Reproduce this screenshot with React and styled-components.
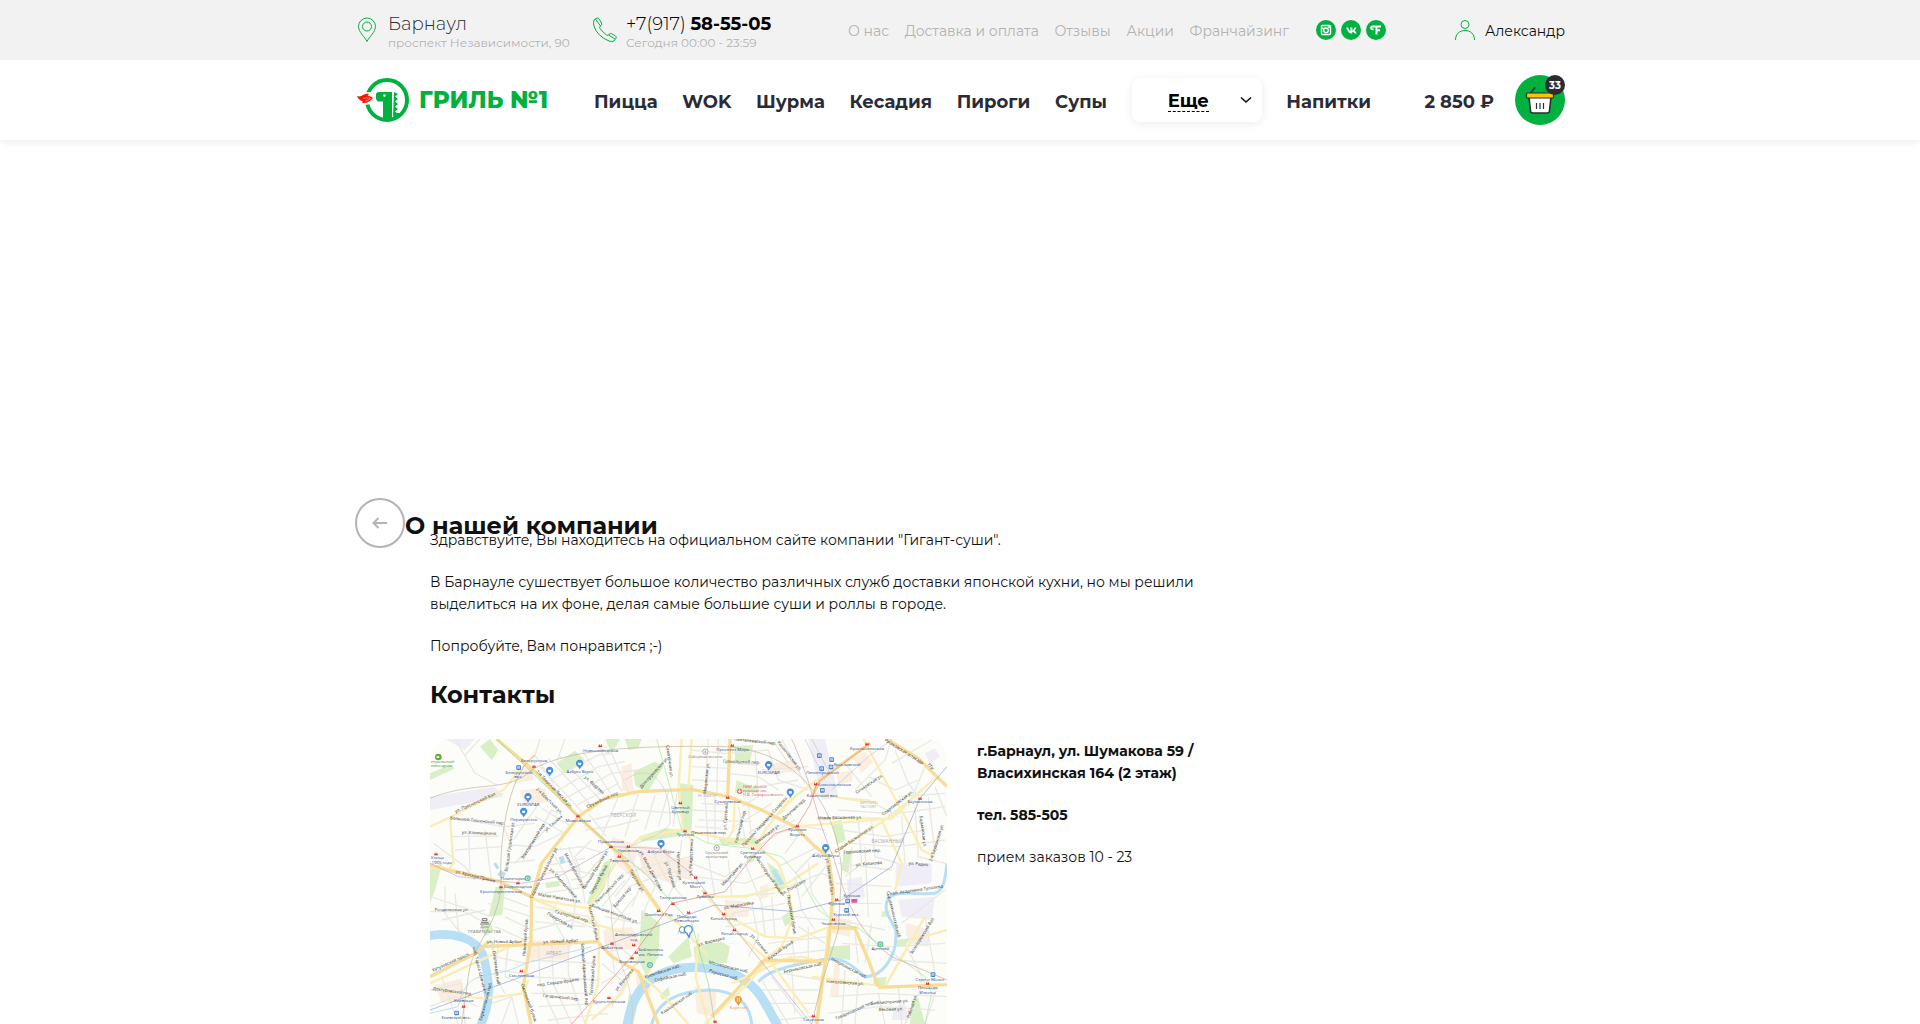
import React from "react";
import styled, { createGlobalStyle } from "styled-components";
import { FaVk } from "react-icons/fa";

const GREEN = "#00b140";
const DARK = "#2b2b35";
const MUTED = "#b3b3b3";

const GlobalStyle = createGlobalStyle`
  * { box-sizing: border-box; }
  body {
    margin: 0;
    background: #fff;
    color: #111;
    font-family: Montserrat, Inter, "Open Sans", sans-serif;
    font-size: 14px;
    font-weight: 400;
    line-height: 22px;
  }
  a { color: inherit; text-decoration: none; }
  h1, h2, p { margin: 0; }
`;

const Page = styled.div`
  min-height: 100vh;
  display: flex;
  flex-direction: column;
`;

const Container = styled.div`
  width: 100%;
  max-width: 1210px;
  margin: 0 auto;
`;

const TopBar = styled.div`
  position: relative;
  z-index: 1;
  background: #f2f2f2;
`;

const TopRow = styled(Container)`
  height: 60px;
  display: grid;
  grid-template-columns: 238px 255px 468px 1fr auto;
  align-items: center;
`;

const InfoBlock = styled.div`
  display: flex;
  align-items: center;
  gap: 9px;
`;

const InfoIcon = styled.svg`
  width: 24px;
  height: 26px;
  flex: none;
  fill: none;
  stroke: ${GREEN};
`;

const InfoLines = styled.div`
  display: flex;
  flex-direction: column;
  padding-top: 4px;
  white-space: nowrap;
`;

const InfoTitle = styled.a`
  font-size: 18px;
  font-weight: 300;
  line-height: 22px;
  color: ${(p) => (p.$dark ? "#000" : DARK)};
  b { font-weight: 700; }
`;

const InfoNote = styled.span`
  font-size: 12px;
  line-height: 16px;
  color: ${MUTED};
`;

const TopLinks = styled.nav`
  width: 441px;
  padding-top: 2px;
  display: flex;
  justify-content: space-between;
  color: ${MUTED};
  white-space: nowrap;
`;

const Socials = styled.div`
  display: flex;
  gap: 5px;
`;

const SocialLink = styled.a`
  width: 20px;
  height: 20px;
  border-radius: 50%;
  background: ${GREEN};
  color: #fff;
  display: flex;
  align-items: center;
  justify-content: center;
`;

const UserLink = styled.a`
  display: flex;
  align-items: center;
  gap: 10px;
  color: #111;
  span { padding-top: 2px; }
`;

const Header = styled.header`
  background: #fff;
  box-shadow: 0 0 10px rgba(0, 0, 0, 0.12);
`;

const HeaderRow = styled(Container)`
  height: 80px;
  display: flex;
  align-items: center;
`;

const Logo = styled.a`
  width: 239px;
  flex: none;
  display: flex;
  align-items: center;
  gap: 10px;
  color: ${GREEN};
  font-size: 23px;
  font-weight: 800;
  line-height: 30px;
  white-space: nowrap;
`;

const Menu = styled.nav`
  width: 777px;
  display: flex;
  align-items: center;
  justify-content: space-between;
  color: ${DARK};
  font-size: 18px;
  font-weight: 700;
  white-space: nowrap;
`;

const MenuLink = styled.a`
  padding-top: 4px;
`;

const MoreButton = styled.button`
  width: 130px;
  height: 44px;
  padding: 0 10px 0 36px;
  border: 0;
  border-radius: 8px;
  background: #fff;
  box-shadow: 0 2px 10px rgba(0, 0, 0, 0.08);
  display: flex;
  align-items: center;
  justify-content: space-between;
  color: #000;
  font: inherit;
  cursor: pointer;
  span { padding-top: 2px; border-bottom: 1px dashed #000; line-height: 20px; }
`;

const Total = styled.span`
  margin-left: auto;
  padding-top: 4px;
  color: ${DARK};
  font-size: 18px;
  font-weight: 700;
  white-space: nowrap;
`;

const CartButton = styled.button`
  position: relative;
  width: 50px;
  height: 50px;
  margin-left: 21px;
  padding: 0;
  border: 0;
  border-radius: 50%;
  background: ${GREEN};
  cursor: pointer;
  svg { display: block; }
`;

const CartCount = styled.span`
  position: absolute;
  top: 0;
  right: 0;
  width: 20px;
  height: 20px;
  padding-top: 1px;
  border-radius: 50%;
  background: ${DARK};
  color: #fff;
  font-family: Montserrat, Inter, sans-serif;
  font-size: 10px;
  font-weight: 700;
  line-height: 20px;
  text-align: center;
`;

const Main = styled.main`
  flex: 1;
  display: flex;
  flex-direction: column;
  padding-top: 358px;
`;

const TitleRow = styled(Container)`
  display: flex;
  align-items: center;
`;

const BackButton = styled.button`
  width: 50px;
  height: 50px;
  padding: 0;
  border: 2px solid ${MUTED};
  border-radius: 50%;
  background: transparent;
  display: flex;
  align-items: center;
  justify-content: center;
  cursor: pointer;
`;

const Title = styled.h1`
  padding-top: 6px;
  font-size: 24px;
  font-weight: 700;
  line-height: 32px;
`;

const Body = styled(Container)`
  flex: 1;
  display: flex;
  flex-direction: column;
  margin-top: -19px;
  padding: 0 325px 0 75px;
`;

const Paragraph = styled.p`
  margin-bottom: 20px;
  font-weight: ${(p) => (p.$strong ? 700 : 400)};
`;

const Subtitle = styled.h2`
  margin: 2px 0 28px;
  font-size: 24px;
  font-weight: 700;
  line-height: 32px;
`;

const Contacts = styled.div`
  flex: 1;
  display: grid;
  grid-template-columns: 517fr 263fr;
  gap: 30px;
`;

const Address = styled.div`
  padding-top: 1px;
`;

const MapFrame = styled.div`
  position: relative;
  min-height: 280px;
  border-radius: 20px 20px 0 0;
  overflow: hidden;
  background: #fcfdf8;
  svg {
    position: absolute;
    inset: 0;
    width: 100%;
    height: 100%;
    display: block;
    font-family: "Open Sans", "Noto Sans", sans-serif;
  }
`;

const PARKS = [
  "M395 100L450 62L480 90L418 130Z", "M540 27L585 27L560 70Z", "M625 125L690 95L715 110L665 190L630 165Z",
  "M600 27L650 27L640 55L610 60Z", "M765 160L805 165L800 300L770 310Z", "M195 27L220 60L200 90L165 50Z",
  "M15 412L52 400L30 480L15 520Z", "M212 470L240 470L232 555L190 560Z", "M168 590L195 570L205 600L180 620Z",
  "M650 540L705 580L700 680L665 740L640 690Z", "M730 680L790 620L800 680L745 700Z", "M640 320L720 295L770 300L765 318L650 335Z",
  "M535 400L560 385L540 470L500 530L485 520Z", "M360 458L400 452L405 468L365 475Z", "M190 625L210 640L205 670Z",
  "M612 790L640 810L625 882L600 882Z", "M705 795L730 770L735 795L712 810Z", "M928 48L985 45L975 95L930 97Z",
  "M935 150L980 170L975 190L930 188Z", "M1220 275L1250 270L1262 330L1235 345Z", "M1255 365L1280 360L1270 430L1250 420Z",
  "M805 650L890 635L915 650L905 700L812 698Z", "M880 325L990 325L1010 345L890 345Z", "M1025 395L1060 420L1085 470L1060 490L1045 450Z",
  "M1205 650L1275 645L1275 690L1200 680Z", "M1410 630L1455 625L1440 650L1410 650Z", "M1460 810L1480 805L1500 882L1455 882Z",
  "M975 375L995 370L985 395L960 400Z", "M1070 560L1100 540L1105 570L1080 590Z", "M15 130L75 105L90 115L15 150Z",
  "M1370 545L1395 540L1390 560L1370 560Z", "M1345 745L1385 740L1380 765L1345 765Z", "M975 178L995 162L998 184L982 192Z",
];
const BLOCKS = [
  "M260 120L320 110L325 150L270 160Z", "M285 180L360 175L370 215L300 225Z", "M560 320L640 345L620 440L570 400Z",
  "M640 345L740 360L735 460L650 430Z", "M310 630L440 640L430 690L300 685Z", "M535 600L620 590L650 650L540 670Z",
  "M30 765L110 745L120 810L50 820Z", "M590 110L620 100L625 190L590 180Z", "M735 380L805 390L800 450L740 440Z",
  "M900 510L975 515L970 560L900 560Z", "M810 770L875 785L870 860L815 850Z", "M1030 105L1100 90L1130 120L1040 135Z",
  "M1285 85L1320 65L1345 95L1310 130Z", "M1235 130L1285 120L1280 155L1240 165Z", "M1225 560L1280 570L1275 620L1220 610Z",
  "M965 320L1010 325L1000 360L960 350Z", "M1450 580L1485 590L1475 630L1440 615Z", "M1005 470L1030 460L1030 500L1005 510Z",
  "M630 725L665 735L680 790L640 790Z", "M1230 690L1245 690L1240 800L1215 800Z",
];
const YARDS = [
  "M15 200L210 170L235 200L15 240Z", "M60 27L150 27L120 60Z", "M1150 27L1200 27L1240 200L1190 210Z",
  "M1415 400L1520 400L1520 460L1410 470Z", "M1420 510L1530 500L1520 570L1430 560Z", "M1440 580L1515 600L1510 650L1450 640Z",
  "M1500 70L1530 55L1545 80L1515 100Z", "M1265 450L1310 440L1320 500L1270 520Z", "M1410 830L1440 820L1450 870L1400 870Z",
];
const MINOR = [
  "M90 27L150 130L215 165", "M165 27L120 75", "M345 27L330 75L385 160", "M420 27L395 95", "M375 150L520 75L560 70",
  "M400 180L520 110L600 95", "M430 200L560 130L640 120", "M455 225L580 160", "M345 110L420 190L470 245", "M370 85L450 170L500 230",
  "M400 75L480 160L530 215", "M470 60L530 150L560 195", "M520 45L590 185", "M560 70L610 185", "M15 290L75 262L235 290L330 280",
  "M75 262L130 230L235 190", "M80 320L220 318", "M90 360L230 350", "M25 340L120 410L150 450", "M130 300L135 420", "M180 300L195 420L200 455",
  "M235 290L260 345L330 350L430 300", "M265 330L335 230", "M300 380L380 240L410 255", "M270 400L360 300", "M330 260L420 310", "M350 235L440 290",
  "M240 400L330 390", "M390 360L470 350L540 370", "M375 405L480 385", "M365 430L450 420L530 440", "M350 490L490 470", "M330 530L490 560L510 600",
  "M390 380L430 450L450 530", "M430 350L470 450L480 520", "M500 330L450 380L465 420", "M540 370L480 440L440 450", "M330 575L480 590", "M325 600L440 570L520 600",
  "M400 500L380 560L420 630", "M455 500L440 600", "M480 300L560 290L640 270", "M500 270L620 240L770 250", "M530 320L580 200", "M600 320L640 190",
  "M660 300L690 195", "M700 290L730 185", "M745 290L755 190", "M490 250L545 320", "M600 345L650 460L620 530", "M630 350L690 470L650 560",
  "M680 360L720 440L790 520", "M720 355L750 470", "M770 330L755 450L730 500", "M600 430L700 400L800 380", "M610 470L720 430L800 420", "M570 500L640 410",
  "M530 530L600 450", "M540 560L640 580L700 545", "M560 590L630 500", "M590 625L600 560L560 520", "M60 470L60 550L130 640", "M15 500L200 560", "M50 570L180 540",
  "M90 490L100 600L140 630", "M15 545L120 545L200 590", "M230 500L310 530", "M240 560L300 590", "M210 590L300 630", "M190 520L320 560", "M220 640L210 740L240 790",
  "M250 640L240 740L290 760", "M210 680L300 700", "M205 720L295 730", "M340 640L345 760L400 882", "M380 640L385 760L440 882", "M430 640L430 730L480 880", "M475 650L480 800",
  "M310 690L510 700", "M300 740L520 750", "M320 790L500 790", "M340 830L530 820", "M370 870L550 850", "M530 700L600 760L560 830", "M560 660L570 740", "M530 760L600 720L640 700",
  "M15 780L110 760L120 882", "M50 740L100 882", "M15 830L90 800L160 830", "M200 820L260 800L280 882", "M230 882L260 800", "M570 640L620 680",
  "M795 60L900 70L1030 60", "M850 27L840 200", "M880 27L875 195", "M800 110L910 115", "M800 150L910 155", "M905 130L1000 140L1060 180", "M920 100L1000 105", "M990 60L1000 200L950 230",
  "M1030 60L1060 150L1150 180", "M1010 120L1150 110", "M1000 170L1120 150", "M930 27L1050 40L1090 100", "M1070 27L1140 160", "M830 220L900 225", "M800 240L900 245", "M820 270L980 275",
  "M810 290L890 295", "M840 200L850 340", "M870 200L870 330", "M940 230L960 325", "M970 230L980 330", "M930 290L1040 220", "M970 310L1080 240", "M1010 325L1110 270",
  "M1000 350L1060 310L1110 290", "M1080 370L1140 290L1200 300", "M1060 410L1180 350", "M1110 430L1170 370L1220 380", "M1130 500L1210 400", "M1090 470L1190 430L1220 440",
  "M1150 400L1160 490L1210 560", "M1110 440L1130 540L1170 600", "M800 400L900 440L960 400", "M810 440L960 460L1030 430", "M850 380L870 500", "M910 390L920 500", "M960 400L1010 520L1020 620",
  "M900 500L1050 490", "M920 550L1080 520", "M900 590L1110 560L1210 570", "M980 520L1000 620L970 680", "M1040 500L1050 620", "M1120 590L1200 640", "M1030 640L1210 620",
  "M1020 680L1200 660", "M1150 590L1150 690", "M1100 620L1110 700", "M1215 200L1330 210L1420 260", "M1240 240L1390 250", "M1250 300L1380 320L1500 300", "M1270 340L1420 350L1560 330",
  "M1340 270L1350 380L1420 400", "M1300 265L1310 400L1260 440", "M1430 260L1440 400", "M1470 230L1480 380L1560 400", "M1510 200L1530 370", "M1390 255L1560 230", "M1420 200L1560 190",
  "M1330 140L1410 180L1480 150", "M1290 180L1380 90L1400 27", "M1410 60L1450 160L1480 200", "M1260 100L1340 200", "M1500 110L1450 230", "M1530 170L1566 260", "M1400 100L1520 30",
  "M1240 400L1400 420", "M1230 460L1400 470", "M1280 350L1270 560", "M1320 350L1330 560", "M1220 520L1370 520", "M1240 570L1380 600", "M1290 610L1300 700", "M1340 580L1320 700",
  "M1250 640L1400 650", "M1400 650L1560 640", "M1430 580L1560 480", "M1440 640L1500 760", "M1500 560L1530 730", "M1400 690L1566 700", "M1260 720L1250 882", "M1300 740L1290 882",
  "M1220 800L1360 790L1566 800", "M1210 850L1360 830L1530 840", "M1360 790L1380 882", "M1420 770L1430 882", "M1490 770L1440 882", "M1540 760L1500 882", "M1010 750L1090 882",
  "M1040 740L1130 860", "M1070 730L1190 750L1180 880", "M1100 720L1110 850", "M1000 780L1180 780", "M1020 820L1190 820", "M1060 870L1160 860",
];
const ROADS = [
  "M15 290L75 262L235 180L285 120L330 75", "M75 262L85 400L70 420", "M225 455L340 510L490 535", "M490 535L590 370L650 320L770 300L900 325L1000 350",
  "M490 535L520 590L522 640", "M320 505L500 580L640 620", "M585 375L700 540L760 580L850 680", "M770 27L760 180L775 300L800 330", "M800 27L790 180",
  "M930 200L925 300L900 340", "M1000 350L1060 400L1090 480L1105 560L1070 650L1000 700", "M1060 250L1110 200L1175 150", "M1000 345L1020 300L1100 200",
  "M1110 290L1400 265L1500 170L1540 140", "M1175 265L1370 265", "M1315 27L1380 150L1445 270L1490 360L1530 380", "M1215 375L1380 270L1480 190", "M1370 270L1430 400L1410 480",
  "M830 500L960 500L1080 465L1180 400", "M895 550L1020 620L1120 625L1215 590", "M830 480L880 540L960 630L1040 700L1150 850", "M1220 600L1300 590", "M1205 700L1130 680L1020 700L970 760L840 882",
  "M320 620L15 760", "M110 800L180 805L295 790L310 750", "M522 640L520 760L480 882", "M640 730L700 780L790 882", "M920 760L1100 680", "M1380 770L1460 630L1566 600", "M1160 740L1380 770", "M1380 770L1420 700L1500 560",
  "M640 680L590 790L500 870", "M820 610L812 740L850 882", "M1210 590L1190 800L1175 882", "M15 412L70 420L225 455", "M1175 190L1220 200L1360 220",
];
const HIGHWAYS = [
  "M215 27L330 125L460 260L585 375L640 450L705 540", "M15 405L70 420L225 455L318 500", "M318 882L295 770L318 630L320 500L350 400L460 260L540 205L640 185L800 178L910 200L1010 240L1110 290L1170 350L1210 380L1225 480L1210 650L1190 760L1175 882",
  "M915 27L908 200", "M1160 200L1185 150L1240 110L1335 40", "M1385 27L1480 85L1566 170", "M170 650L522 635", "M522 640L560 680L640 725L680 830L700 882", "M15 740L160 665L190 635", "M1212 592L1290 595L1330 690L1360 770", "M1360 772L1566 764", "M860 860L1000 710L1020 690L1200 695",
];
const RIVERS = [
  { d: "M0 620C80 600 165 625 178 690C192 750 205 810 160 900", w: 26 },
  { d: "M605 900C615 810 650 760 700 735C770 700 850 710 920 730C1000 760 1020 820 1065 900", w: 28 },
  { d: "M680 882C700 810 760 785 850 780C930 780 975 820 980 882", w: 9 },
  { d: "M1000 755C1030 720 1100 705 1200 688C1270 680 1290 720 1320 740C1370 740 1420 680 1412 600C1400 570 1370 540 1390 505C1410 480 1470 495 1530 490C1560 480 1560 440 1566 400", w: 9 },
  { d: "M1045 420L1075 470", w: 13 },
  { d: "M404 392L418 388", w: 22 },
  { d: "M225 440L235 425M210 410L218 405", w: 20 },
];
const METRO = [
  { d: "M215 27L460 260L560 350L660 430L800 580L850 760L870 882", c: "#8fd88c" },
  { d: "M695 27L770 300L850 340L975 355L1070 380L1130 450L1180 540L1230 575L1300 595L1500 740L1520 790L1500 882", c: "#a5e89c" },
  { d: "M15 400L100 440L290 460L400 440L560 350L700 355L800 430L900 560L1160 882", c: "#c7a3cc" },
  { d: "M15 840L290 740L560 640L800 550L870 525L1110 545L1250 510L1400 410L1485 205L1566 110", c: "#8d9fd0" },
  { d: "M440 882L620 680L740 520L900 485L975 390L1050 310L1115 290L1155 225L1175 160L1335 40", c: "#ef8074" },
  { d: "M15 205C150 150 250 190 320 120C420 60 620 45 900 50C1100 60 1230 200 1250 420L1240 600L1190 760L1160 882", c: "#c3b197" },
  { d: "M330 75C260 120 220 300 228 470C215 600 140 640 130 740L110 882", c: "#c3b197" },
  { d: "M600 150C700 80 740 200 735 280C700 350 500 320 560 530C550 680 640 760 620 882", c: "#d0cbc4" },
  { d: "M1100 27C1170 180 1170 260 1225 380C1260 500 1290 600 1400 680L1566 750", c: "#d39db4" },
  { d: "M15 850L100 830C130 700 190 760 300 700L500 650", c: "#a9cdec" },
  { d: "M1140 27L1200 150M1160 27L1215 130M1220 180L1330 80L1400 30", c: "#c9c9c9" },
];
// [text, x, y, angle]
const STREETS = [
  ["Большой Тишинский пер.", 157, 276, 6], ["ул. Пресненский Вал", 152, 222, -24], ["ул. Климашкина", 162, 313, 2], ["1-я Тверская-Ямская ул.", 385, 180, 46],
  ["2-я Брестская ул.", 370, 215, 45], ["Оружейный пер.", 535, 213, -24], ["Садовая-Триумфальная ул.", 360, 430, -63], ["Большая Грузинская ул.", 258, 350, -82],
  ["ул. Красная Пресня", 150, 443, 14], ["Электрический пер.", 328, 335, -58], ["ул. Гашека", 388, 283, -42], ["Рочдельская ул.", 80, 543, 0], ["Малая Никитская ул.", 403, 508, 10],
  ["Поварская ул.", 403, 575, 30], ["Скатертный пер.", 440, 563, 16], ["Большая Никитская ул.", 568, 555, 20], ["Новинский бульв.", 305, 622, -86], ["ул. Новый Арбат", 238, 640, 0],
  ["ул. Новый Арбат", 407, 638, -2], ["Тверской бульв.", 525, 450, -62], ["Никитский бульв.", 502, 580, 78], ["Тверская ул.", 632, 455, 60], ["ул. Малая Дмитровка", 675, 425, 62],
  ["ул. Петровка", 732, 435, 72], ["Неглинная ул.", 758, 410, 86], ["ул. Рождественка", 802, 382, -88], ["Малая Бронная ул.", 446, 425, 62], ["ул. Спиридоновка", 412, 462, 48],
  ["Большая Бронная ул.", 515, 420, -58], ["Леонтьевский пер.", 557, 478, -46], ["Брюсов пер.", 596, 503, -50], ["ул. Фадеева", 505, 168, 42], ["Долгоруковская ул.", 690, 130, -48],
  ["Самотёчная ул.", 730, 95, 82], ["Смоленский бульв.", 308, 820, 70], ["Кутузовский просп.", 80, 700, -24], ["Смоленская наб.", 210, 715, 82], ["наб. Тараса Шевченко", 160, 722, 76],
  ["пер. Сивцев Вражек", 400, 761, -8], ["Гагаринский пер.", 408, 806, 6], ["Гоголевский бульв.", 507, 735, -86], ["Большой Афанасьевский пер.", 475, 735, 86], ["ул. Волхонка", 601, 752, -52],
  ["Кремлёвская наб.", 714, 728, -18], ["Софийская наб.", 738, 745, -12], ["Кадашёвская наб.", 758, 822, -34], ["Бережковская наб.", 186, 815, -75], ["Дохтуровский пер.", 82, 788, 8],
  ["Пантелеевский пер.", 990, 38, 6], ["Мещанская ул.", 848, 145, -84], ["Докучаев пер.", 1110, 240, -42], ["Грохольский пер.", 950, 100, 2], ["Каланчёвская ул.", 1090, 80, 52],
  ["Проспект Академика Сахарова", 1022, 278, -48], ["Мясницкая ул.", 1030, 315, -38], ["Новая Басманная ул.", 1245, 267, -1], ["Старая Басманная ул.", 1290, 330, -34], ["Спартаковская ул.", 1420, 222, -38],
  ["Ольховская ул.", 1335, 165, -34], ["ул. Сретенка", 906, 260, -86], ["Костянский пер.", 950, 290, -75], ["Печатников пер.", 852, 313, 0], ["Мясницкая ул.", 925, 435, -48],
  ["Чистопрудный бульв.", 1030, 440, 55], ["ул. Покровка", 1107, 475, -30], ["Покровский бульв.", 1096, 555, 80], ["ул. Маросейка", 942, 530, -10], ["ул. Земляной Вал", 1210, 440, 82],
  ["Гороховский пер.", 1312, 368, -3], ["ул. Казакова", 1332, 405, -5], ["ул. Радио", 1480, 406, 5], ["Бауманская ул.", 1490, 305, 82], ["2-я Бауманская ул.", 1538, 340, -72],
  ["ТТК", 1513, 112, 52], ["Русаковская эстакада", 1435, 68, 32], ["наб. Академика Туполева", 1475, 484, -8], ["Сыромятническая наб.", 1402, 555, 76], ["Яузский бульв.", 1070, 663, -36],
  ["Москворецкая наб.", 910, 715, 14], ["Раушская наб.", 895, 738, 16], ["Берниковская наб.", 1135, 717, -12], ["Николоямская наб.", 1270, 718, 28], ["Николоямская ул.", 1260, 762, 4],
  ["ул. Варварка", 860, 638, -14], ["ул. Солянка", 1000, 645, 50], ["Библиотечная ул.", 1395, 820, -4], ["Товарищеский пер.", 1290, 845, -24], ["Вековая ул.", 1398, 842, -2],
  ["Золоторожский Вал", 1495, 620, -58], ["Рабочая ул.", 1465, 830, -72],
];
const STATIONS = [
  ["Новослободская", 527, 65], ["Белорусская", 327, 97], ["Белорусский", 282, 131], ["вкз.", 280, 145], ["Маяковская", 459, 276], ["Азбука Вкуса", 465, 128], ["Цветной", 766, 236], ["бульвар", 766, 249],
  ["Трубная", 781, 318], ["Пушкинская", 558, 338], ["Чеховская", 610, 365], ["Тверская", 583, 395], ["Азбука Вкуса", 708, 368], ["Баррикадная", 279, 475], ["Краснопресненская", 228, 488],
  ["Планетарий", 266, 449], ["Театральная", 744, 508], ["Охотный Ряд", 701, 559], ["Площадь", 785, 564], ["Революции", 785, 577], ["Александровский", 626, 618], ["сад", 626, 632], ["Арбатская", 561, 657],
  ["Библиотека", 677, 664], ["им. Ленина", 677, 678], ["Боровицкая", 621, 699], ["Смоленская", 289, 740], ["Кропоткинская", 552, 819], ["Киевская", 116, 817], ["Киевский вкз.", 93, 866],
  ["Улица", 37, 388], ["1905 года", 50, 402], ["Проспект Мира", 923, 63], ["Сухаревская", 908, 219], ["Красносельская", 1326, 59], ["Ярославский", 1266, 108], ["Ленинградский", 1192, 133], ["Комсомольская", 1228, 167],
  ["Казанский вкз.", 1192, 200], ["Бауманская", 1485, 220], ["Красные", 1117, 304], ["Ворота", 1117, 318], ["Сретенский", 983, 371], ["бульвар", 983, 385], ["Азбука Вкуса", 1202, 381],
  ["Кузнецкий", 806, 462], ["Мост", 810, 475], ["Лубянка", 840, 503], ["Китай-город", 896, 569], ["Китай-город", 928, 616], ["Курская", 1280, 501], ["Курская", 1235, 525], ["Курский вкз.", 1264, 558],
  ["Чкаловская", 1225, 585], ["Таганская", 1165, 874], ["Площадь", 1508, 777], ["Ильича", 1508, 791], ["Серп и Молот", 1515, 752], ["EUROSPAR", 310, 228], ["Перекрёсток", 296, 272], ["EUROSPAR", 1031, 133], ["Артплей", 1366, 660],
];
const METRO_SIGNS = [
  [526, 47], [327, 109], [459, 258], [766, 219], [780, 303], [558, 350], [610, 349], [583, 379], [279, 459], [228, 471], [744, 521], [701, 542], [791, 547], [561, 640], [626, 645], [634, 667], [621, 684],
  [289, 723], [552, 803], [116, 829], [33, 372], [922, 46], [908, 202], [1326, 42], [1172, 162], [1485, 205], [1117, 288], [983, 355], [812, 442], [840, 489], [896, 552], [928, 600], [1235, 508], [1225, 568], [1165, 858], [1508, 760], [870, 874],
];
const SHOPS = [[374, 123], [464, 102], [309, 202], [296, 246], [708, 342], [1031, 106], [1096, 188], [1202, 355]];
const TRAINS = [[281, 113], [95, 849], [1183, 77], [1220, 89], [1190, 116], [1218, 111], [1192, 181], [1268, 513], [1265, 541], [1524, 734]];

function CityMap() {
  return (
    <svg viewBox="15 27 1551 855" preserveAspectRatio="xMidYMin slice" role="img" aria-label="Карта">
      <rect x="0" y="0" width="1600" height="1600" fill="#fcfdf8" />
      <g fill="#efedf6">{YARDS.map((d) => <path key={d} d={d} />)}</g>
      <g fill="#fbeee0">{BLOCKS.map((d) => <path key={d} d={d} />)}</g>
      <g fill="#d9efc5">{PARKS.map((d) => <path key={d} d={d} />)}</g>
      <g fill="none" stroke="#e9e8e4" strokeWidth="4">{MINOR.map((d) => <path key={d} d={d} />)}</g>
      <g fill="none" stroke="#b9dff5">{RIVERS.map((r) => <path key={r.d} d={r.d} strokeWidth={r.w} />)}</g>
      <g fill="none" stroke="#fbedb6" strokeWidth="7" strokeLinejoin="round">{ROADS.map((d) => <path key={d} d={d} />)}</g>
      <g fill="none" stroke="#f8dc9a" strokeWidth="10" strokeLinejoin="round">{HIGHWAYS.map((d) => <path key={d} d={d} />)}</g>
      <g fill="none" strokeWidth="2">{METRO.map((m) => <path key={m.d} d={m.d} stroke={m.c} />)}</g>
      <g fontSize="13" textAnchor="middle" fill="#333">
        {STREETS.map(([t, x, y, a], i) => <text key={i} x={x} y={y} transform={`rotate(${a} ${x} ${y})`}>{t}</text>)}
      </g>
      <g fontSize="13" textAnchor="middle" fill="#1f4a9c">
        {STATIONS.map(([t, x, y], i) => <text key={i} x={x} y={y}>{t}</text>)}
      </g>
      <g fontSize="15" textAnchor="middle" fill="#a9a9c0">
        <text x="595" y="261">ТВЕРСКОЙ</text>
        <text x="386" y="675">АРБАТ</text>
        <text x="1388" y="339">БАСМАННЫЙ</text>
      </g>
      <g fontSize="11" textAnchor="middle" fill="#b4b0c4">
        <text x="847" y="200">ЯК МАЖОР</text>
        <text x="1330" y="221">ВИТТОРЕ</text>
        <text x="1330" y="234">FACTORY</text>
      </g>
      <g fontSize="12" textAnchor="middle" fill="#777">
        <text x="178" y="595">Дом</text>
        <text x="178" y="608">ПРАВИТЕЛЬСТВА</text>
        <text x="841" y="83">Соборная мечеть</text>
        <text x="875" y="371">Сретенский</text>
        <text x="875" y="384">монастырь</text>
      </g>
      <g fontSize="12" fill="#d9536b">
        <text x="954" y="175">НИИ скорой</text>
        <text x="954" y="187">помощи им.</text>
        <text x="954" y="199">Н.В. Склифосовского</text>
      </g>
      <g fontSize="13" fill="#479a2a">
        <text x="17" y="100">нтральный</text>
        <text x="17" y="112">ипподром</text>
      </g>
      <text x="940" y="837" fontSize="13" textAnchor="middle" fill="#ec8b3c">Корстон</text>
      <path d="M165 582h28M168 577h22M172 572h14v-6h-14z" stroke="#777" strokeWidth="3" fill="none" />
      <g fill="#e5342f">{METRO_SIGNS.map(([x, y], i) => <path key={i} transform={`translate(${x} ${y})`} d="M-6 4L-3 -5L0 1L3 -5L6 4Z" />)}</g>
      {TRAINS.map(([x, y], i) => (
        <g key={i} transform={`translate(${x} ${y})`}>
          <rect x="-7" y="-7" width="14" height="14" rx="3" fill="#4c83d6" />
          <path d="M-3 3V-3H3V3M-3 1H3" stroke="#fff" strokeWidth="2" fill="none" />
        </g>
      ))}
      {SHOPS.map(([x, y], i) => (
        <g key={i} transform={`translate(${x} ${y})`}>
          <path d="M0 16L-5 8A11 11 0 1 1 5 8Z" fill="#4590e0" />
          <path d="M-5 -4H5L4 3H-4Z" fill="#fff" />
        </g>
      ))}
      <circle cx="40" cy="81" r="10" fill="#5fae35" />
      <path d="M35 79h8v5h-8z" fill="#fff" />
      <g fill="#62bfa0"><circle cx="308" cy="445" r="9" /><circle cx="675" cy="705" r="9" /><circle cx="1366" cy="643" r="9" /></g>
      <g fill="none" stroke="#fff" strokeWidth="2"><circle cx="308" cy="445" r="4" /><circle cx="675" cy="705" r="4" /><circle cx="1366" cy="643" r="4" /></g>
      <circle cx="944" cy="184" r="8" fill="#e47381" />
      <path d="M944 179v10M939 184h10" stroke="#fff" strokeWidth="3" />
      <g fill="#fff" stroke="#888" strokeWidth="2"><circle cx="841" cy="65" r="8" /><circle cx="875" cy="354" r="8" /></g>
      <path d="M841 61v8M838 66h6M875 350v8M872 353h6" stroke="#888" strokeWidth="2" />
      <path d="M940 828l-6-10a11 11 0 1 1 12 0z" fill="#ee9a3c" />
      <path d="M937 803v12M943 803v12" stroke="#fff" strokeWidth="2" />
      <rect x="1279" y="507" width="18" height="11" rx="2" fill="#d95aa8" />
      <text x="770" y="613" fontSize="12" textAnchor="middle" fill="#4590e0">ГУМ</text>
      <circle cx="772" cy="599" r="9" fill="#fff" stroke="#4590e0" strokeWidth="3" />
      <path d="M792 622l-6-12a12 12 0 1 1 10 -1z" fill="#fff" stroke="#4590e0" strokeWidth="4" />
    </svg>
  );
}

const LogoMark = () => (
  <svg width="54" height="46" viewBox="0 0 54 46" aria-hidden="true">
    <circle cx="32" cy="23" r="20" fill="none" stroke={GREEN} strokeWidth="4" />
    <path d="M8 15.500L17 15L17 27L9 28Z" fill="#fff" />
    <path d="M21 17.500Q21 15 24 15H37V42L28 42L28 24.500H23Q21 24 21 21Z" fill={GREEN} />
    <path d="M39 15l4 2-3 2.500 3 2.500-3 2.500 3 2.500-3 2.500 3 2.500-3 2.500 3 2.500-5 3z" fill={GREEN} />
    <path d="M41 36l5 0-9 7z" fill={GREEN} />
    <circle cx="29.500" cy="18.500" r="1.200" fill="#fff" />
    <path d="M2 19C7 21 8 16 14 17Q12 18.500 13 19Q16 19 18 21Q14 26 9 26Q6 26 8 24Q4 24 2 19Z" fill="#ff1200" />
    <path d="M8 21.500Q12 20 16 21.500M10 24Q13 23.500 15 22" stroke="#fff" strokeWidth=".5" fill="none" />
  </svg>
);

const MENU_BEFORE = ["Пицца", "WOK", "Шурма", "Кесадия", "Пироги", "Супы"];
const TOP_LINKS = ["О нас", "Доставка и оплата", "Отзывы", "Акции", "Франчайзинг"];

export default function App() {
  return (
    <Page>
      <GlobalStyle />
      <TopBar>
        <TopRow>
          <InfoBlock>
            <InfoIcon viewBox="0 0 24 26">
              <path d="M12 24.500C10 20 3.500 15 3.500 9.500A8.500 8.500 0 0 1 20.500 9.500C20.500 15 14 20 12 24.500Z" />
              <circle cx="12" cy="9.500" r="4.500" />
            </InfoIcon>
            <InfoLines>
              <InfoTitle href="#city">Барнаул</InfoTitle>
              <InfoNote>проспект Независимости, 90</InfoNote>
            </InfoLines>
          </InfoBlock>
          <InfoBlock>
            <InfoIcon viewBox="0 0 24 26">
              <path d="M1 3L4 1Q5.500 .8 6.300 2.200L8.500 6Q9.300 7.800 7.500 9Q6 10 7 11.500Q10 15.500 13.500 18Q15 19 16 17.500Q17 16 18.800 16.800L22.500 19Q24 20 22.800 21.500L21 24Q19 25 16 24Q4 19 1 9Q0 5.500 1 3ZM2.500 2.200L7.500 9M15.500 18L22 22" />
            </InfoIcon>
            <InfoLines>
              <InfoTitle $dark href="tel:+7917585505">+7(917) <b>58-55-05</b></InfoTitle>
              <InfoNote>Сегодня 00:00 - 23:59</InfoNote>
            </InfoLines>
          </InfoBlock>
          <TopLinks>{TOP_LINKS.map((t) => <a key={t} href="#page">{t}</a>)}</TopLinks>
          <Socials>
            <SocialLink href="#instagram" aria-label="Instagram">
              <svg width="12" height="12" viewBox="0 0 12 12" fill="none" stroke="#fff">
                <rect x="1.500" y="1.500" width="9" height="9" rx="1" strokeWidth="1.400" />
                <circle cx="6" cy="6.300" r="2.300" strokeWidth="1.300" />
                <path d="M8 3h2M1.500 4.300h2" strokeWidth="1.400" />
              </svg>
            </SocialLink>
            <SocialLink href="#vk" aria-label="VK"><FaVk size={11} /></SocialLink>
            <SocialLink href="#flamp" aria-label="Flamp">
              <svg width="12" height="12" viewBox="0 0 12 12" fill="none" stroke="#fff" strokeWidth="2">
                <path d="M11 2.500H6.500V10.500M6.500 6.300H10M6 2.500H2.500Q1 2.500 1.200 4.200Q1.600 5.500 3.500 5.300" />
              </svg>
            </SocialLink>
          </Socials>
          <UserLink href="#profile">
            <svg width="20" height="20" viewBox="0 0 20 20" fill="none" stroke={GREEN} aria-hidden="true">
              <circle cx="10" cy="4.500" r="4" />
              <path d="M.5 20C.5 14 4.500 10.500 10 10.500S19.500 14 19.500 20" />
            </svg>
            <span>Александр</span>
          </UserLink>
        </TopRow>
      </TopBar>
      <Header>
        <HeaderRow>
          <Logo href="#home"><LogoMark />ГРИЛЬ №1</Logo>
          <Menu>
            {MENU_BEFORE.map((t) => <MenuLink key={t} href="#menu">{t}</MenuLink>)}
            <MoreButton type="button">
              <span>Еще</span>
              <svg width="12" height="8" viewBox="0 0 12 8" fill="none" stroke="#111" strokeWidth="1.600" aria-hidden="true"><path d="M1 1.500L6 6L11 1.500" /></svg>
            </MoreButton>
            <MenuLink href="#menu">Напитки</MenuLink>
          </Menu>
          <Total>2 850 ₽</Total>
          <CartButton type="button" aria-label="Корзина">
            <svg width="50" height="50" viewBox="0 0 50 50" stroke={DARK} strokeWidth="1.200">
              <path d="M15.500 18L20 12.500" strokeWidth="1.600" />
              <path d="M14 22L15.500 36Q15.700 38 18 38H32Q34.300 38 34.500 36L36 22Z" fill="#fff" strokeWidth="1.600" />
              <rect x="11.500" y="18" width="27" height="5" rx="1" fill="#ffc400" />
              <path d="M21.500 28v6M25 28v6M28.500 28v6" />
            </svg>
            <CartCount>33</CartCount>
          </CartButton>
        </HeaderRow>
      </Header>
      <Main>
        <TitleRow>
          <BackButton type="button" aria-label="Назад">
            <svg width="16" height="12" viewBox="0 0 16 12" fill="none" stroke={MUTED} strokeWidth="2"><path d="M15 6H2M6.500 1L1.500 6L6.500 11" /></svg>
          </BackButton>
          <Title>О нашей компании</Title>
        </TitleRow>
        <Body>
          <Paragraph>Здравствуйте, Вы находитесь на официальном сайте компании "Гигант-суши".</Paragraph>
          <Paragraph>В Барнауле сушествует большое количество различных служб доставки японской кухни, но мы решили выделиться на их фоне, делая самые большие суши и роллы в городе.</Paragraph>
          <Paragraph>Попробуйте, Вам понравится ;-)</Paragraph>
          <Subtitle>Контакты</Subtitle>
          <Contacts>
            <MapFrame><CityMap /></MapFrame>
            <Address>
              <Paragraph $strong>г.Барнаул, ул. Шумакова 59 / Власихинская 164 (2 этаж)</Paragraph>
              <Paragraph $strong>тел. 585-505</Paragraph>
              <Paragraph>прием заказов 10 - 23</Paragraph>
            </Address>
          </Contacts>
        </Body>
      </Main>
    </Page>
  );
}
